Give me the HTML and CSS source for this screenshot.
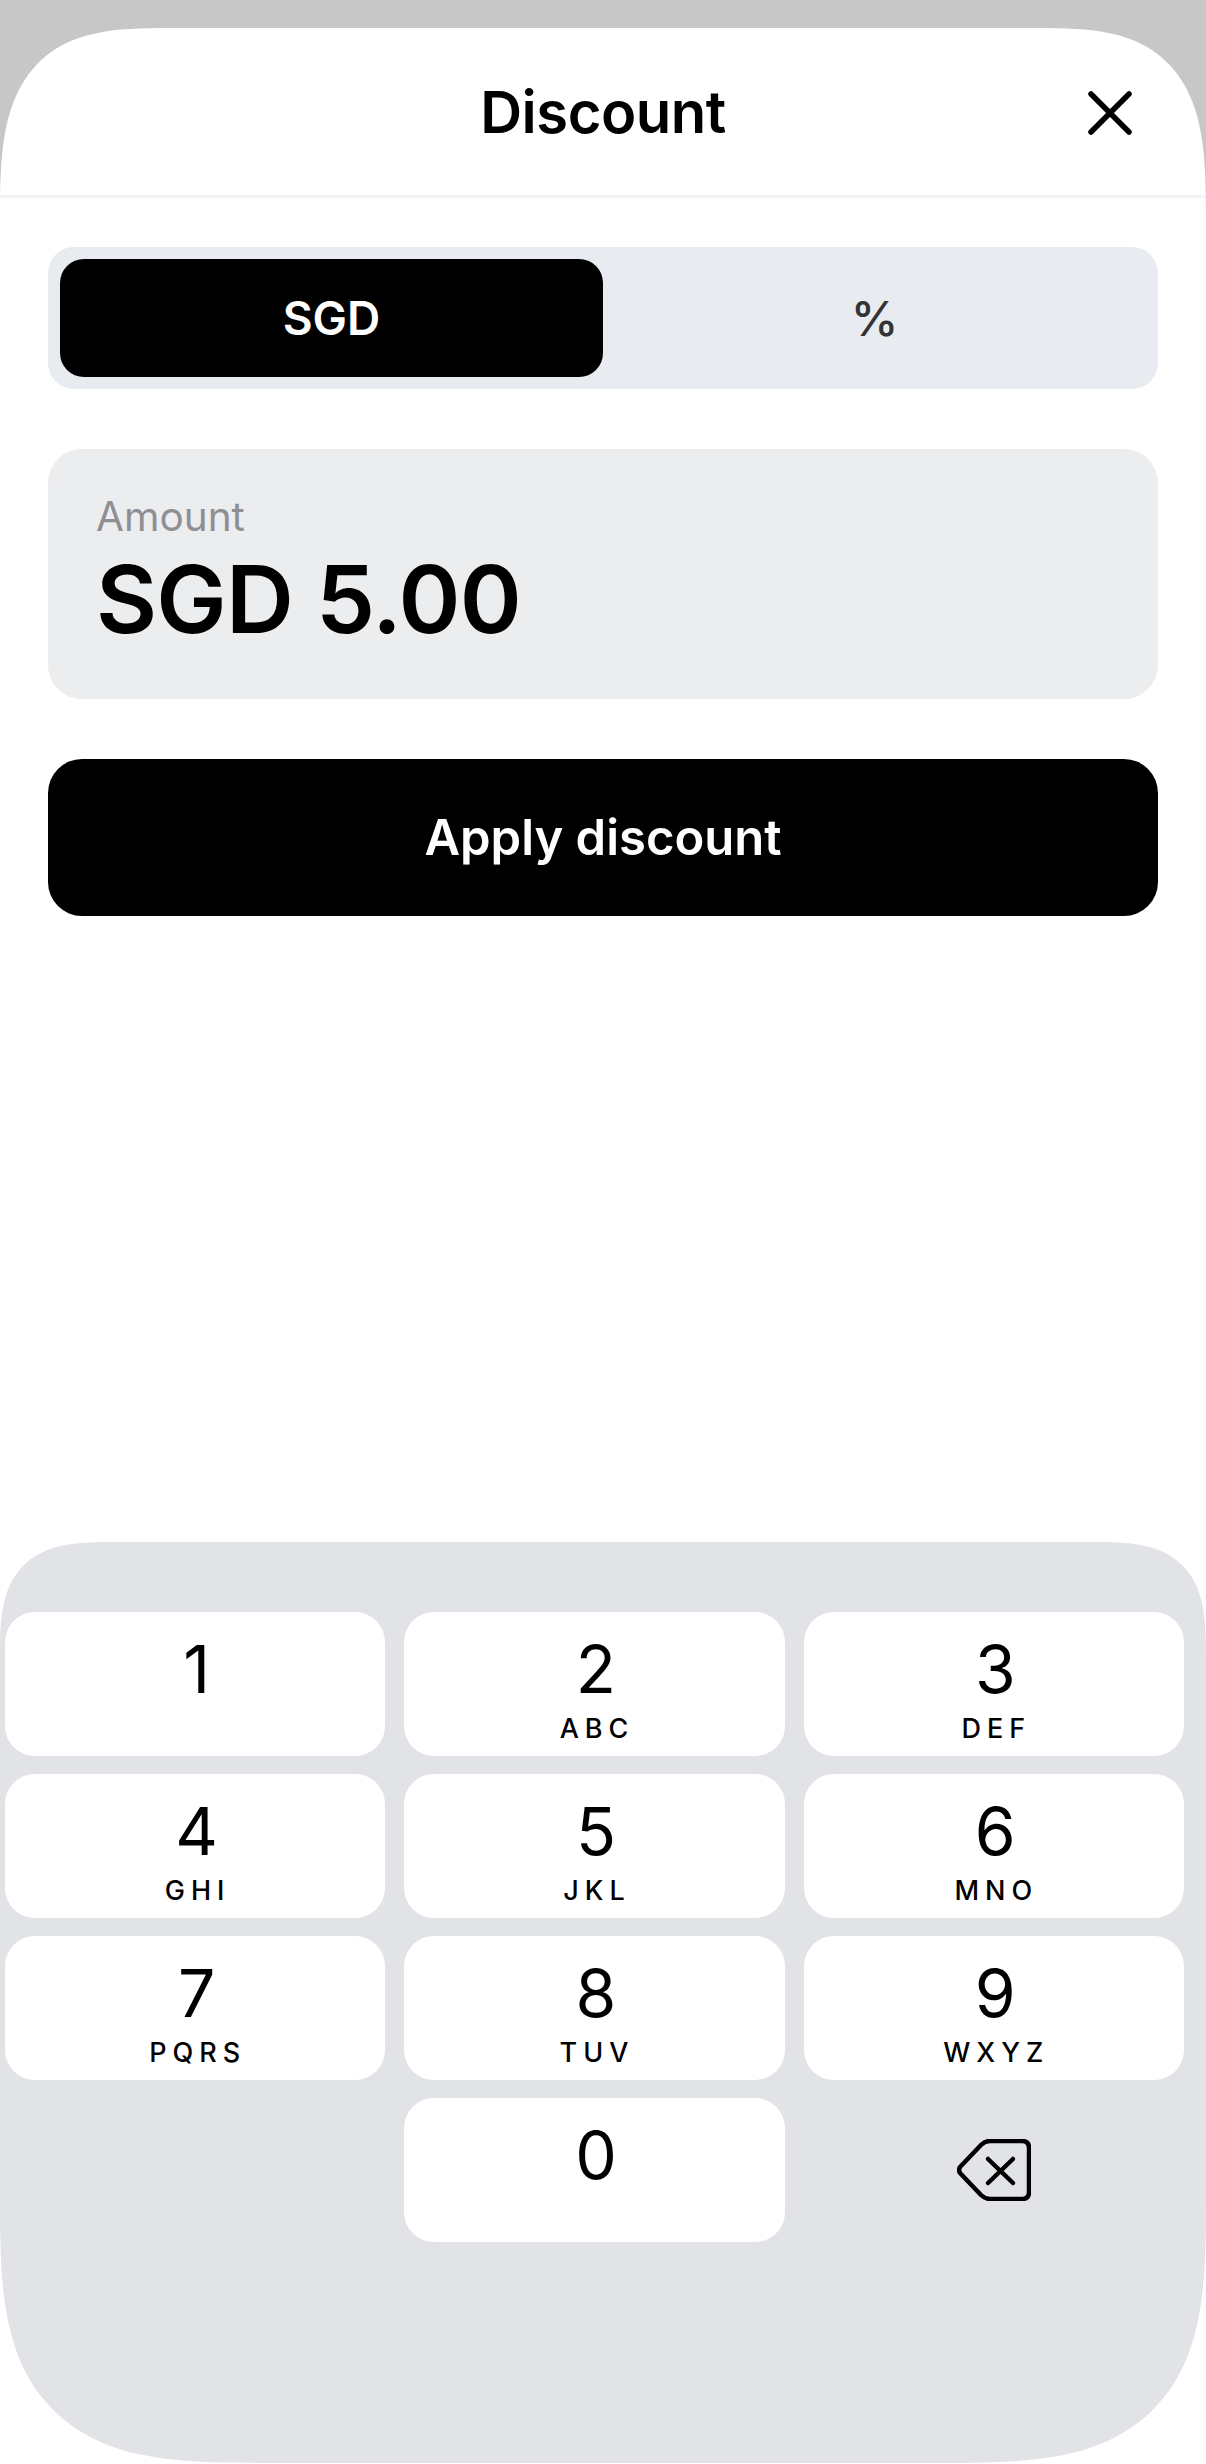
FILE: index.html
```html
<!DOCTYPE html>
<html lang="en">
<head>
  <meta charset="UTF-8">
  <meta name="viewport" content="width=device-width, initial-scale=1.0">
  <title>Discount</title>
  <link rel="stylesheet" href="styles.css">
</head>
<body>
  <div class="sheet">
    <header class="sheet-header">
      <h1>Discount</h1>
      <button class="close-btn" aria-label="Close">
        <svg viewBox="0 0 48 48">
          <path d="M6 5L44 43M44 5L6 43"/>
        </svg>
      </button>
    </header>

    <main class="content">
      <div class="segment">
        <div class="segment-item active">SGD</div>
        <div class="segment-item">%</div>
      </div>

      <div class="amount-box">
        <div class="amount-label">Amount</div>
        <div class="amount-value">SGD 5.00</div>
      </div>

      <button class="btn-apply">Apply discount</button>
    </main>

    <div class="keyboard">
      <div class="key"><span class="digit">1</span></div>
      <div class="key"><span class="digit">2</span><span class="letters">ABC</span></div>
      <div class="key"><span class="digit">3</span><span class="letters">DEF</span></div>
      <div class="key"><span class="digit">4</span><span class="letters">GHI</span></div>
      <div class="key"><span class="digit">5</span><span class="letters">JKL</span></div>
      <div class="key"><span class="digit">6</span><span class="letters">MNO</span></div>
      <div class="key"><span class="digit">7</span><span class="letters">PQRS</span></div>
      <div class="key"><span class="digit">8</span><span class="letters">TUV</span></div>
      <div class="key"><span class="digit">9</span><span class="letters">WXYZ</span></div>
      <div class="key-empty"></div>
      <div class="key"><span class="digit">0</span></div>
      <div class="key-empty backspace">
        <svg viewBox="0 0 74 62">
          <path d="M3.5 27.5L24 6Q28 2 33 2H65Q72 2 72 9V53Q72 60 65 60H33Q28 60 24 56L3.500 34.500Q0.500 31 3.500 27.500Z"/>
          <path d="M31 20L56 44M56 20L31 44"/>
        </svg>
      </div>
    </div>
  </div>
</body>
</html>
```

FILE: styles.css
```css
* {
  margin: 0;
  padding: 0;
  box-sizing: border-box;
}

body {
  font-family: Inter, "Liberation Sans", sans-serif;
  background-color: #c7c7c7;
  color: #000;
  height: 2464px;
  padding-top: 28px;
  overflow: hidden;
}

.sheet {
  background: white;
  height: 2436px;
  border-radius: 170px 170px 0 0 / 190px 190px 0 0;
  corner-shape: superellipse(1.6);
  display: flex;
  flex-direction: column;
}

.sheet-header {
  height: 170px;
  border-bottom: 3px solid #f2f3f4;
  display: flex;
  align-items: center;
  justify-content: center;
  position: relative;
}

.sheet-header h1 {
  font-size: 58px;
  font-weight: 600;
  letter-spacing: -0.5px;
}

.close-btn {
  position: absolute;
  top: 61px;
  right: 73px;
  width: 48px;
  height: 48px;
  background: none;
  border: none;
}

.close-btn svg {
  display: block;
  width: 48px;
  height: 48px;
  fill: none;
  stroke: #000;
  stroke-width: 5.500;
  stroke-linecap: round;
}

.content {
  padding: 49px 48px 0;
  display: flex;
  flex-direction: column;
}

.segment {
  height: 142px;
  background: #e8ecf0;
  border-radius: 26px;
  padding: 12px;
  display: flex;
}

.segment-item {
  flex: 1;
  border-radius: 24px;
  display: flex;
  align-items: center;
  justify-content: center;
  font-size: 48px;
  font-weight: 500;
  color: #333;
}

.segment-item.active {
  background: #000;
  color: white;
  font-size: 46px;
  font-weight: 600;
}

.amount-box {
  height: 250px;
  margin-top: 60px;
  background: #ecedef;
  border-radius: 34px;
  padding: 44px 48px 0;
}

.amount-label {
  font-size: 40.500px;
  line-height: 48px;
  color: #8e8e93;
}

.amount-value {
  font-size: 94px;
  line-height: 116px;
  font-weight: 600;
  letter-spacing: -0.8px;
}

.btn-apply {
  height: 157px;
  margin-top: 60px;
  background: #000;
  color: white;
  border: none;
  border-radius: 34px;
  font-family: inherit;
  font-size: 49px;
  font-weight: 600;
}

.keyboard {
  margin-top: auto;
  height: 921px;
  margin-bottom: 1px;
  background: #e1e3e7;
  border-radius: 115px 115px 260px 260px;
  corner-shape: superellipse(1.6);
  padding: 70px 22px 0 5px;
  display: grid;
  grid-template-columns: repeat(3, 1fr);
  grid-auto-rows: 144px;
  gap: 18px 19px;
}

.key {
  background: white;
  border-radius: 30px;
  padding-top: 25px;
  display: flex;
  flex-direction: column;
  align-items: center;
}

.digit {
  font-size: 66px;
  line-height: 64px;
  padding-left: 3px;
}

.letters {
  margin-top: 13px;
  font-size: 27px;
  line-height: 30px;
  font-weight: 500;
  letter-spacing: 6px;
  margin-right: -5px;
}

.backspace {
  display: flex;
  justify-content: center;
  padding-top: 41px;
}

.backspace svg {
  width: 74px;
  height: 62px;
  fill: none;
  stroke: #000;
  stroke-width: 4.500;
  stroke-linecap: round;
  stroke-linejoin: round;
}
```
